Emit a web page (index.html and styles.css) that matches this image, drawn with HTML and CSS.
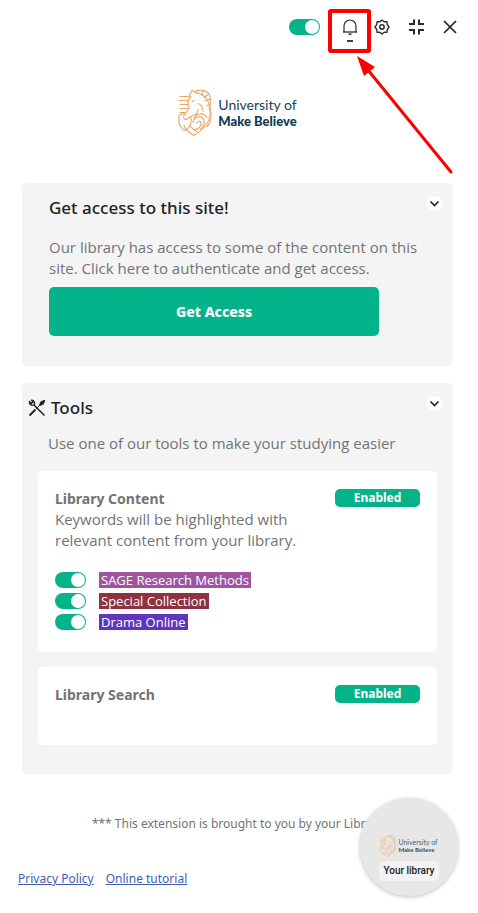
FILE: index.html
```html
<!DOCTYPE html>
<html lang="en">
<head>
<meta charset="utf-8">
<meta name="viewport" content="width=device-width, initial-scale=1">
<title>Library extension</title>
<link rel="stylesheet" href="styles.css">
</head>
<body>
<svg class="defs" aria-hidden="true">
  <symbol id="crest" viewBox="0 0 34 48">
    <g fill="none" stroke="#eba763" stroke-width="1.1" stroke-linecap="round" stroke-linejoin="round">
      <path d="M11 8l3-6 5 3c4 0 7 2 9 5 4 5 5 11 4 17-1 8-6 14-16 20-5-3-9-6-10-10"/>
      <path d="M17 3c7-3 15 0 15 6 1 4 0 8-1 10 3 6 3 14-2 19"/>
      <path d="M13 8c-3 3-4 7-2 12l-5 7c-1 2 0 4 2 4l7-4c3-1 5-3 5-6"/>
      <path d="M20 15c3 1 5 4 5 8M14 13l2-1"/>
      <path d="M1 27l5-2M1 27v7c0 4 3 6 6 8 3-2 6-4 6-8v-5"/>
      <path d="M16 30c3-6 10-6 13-1M15 34c1-6 9-8 11-2 1 4-1 7-4 9M19 35c1-4 5-2 4 1s-4 5-7 5M12 37c2 3 4 5 7 6"/>
      <path d="M2 8h9M1 12h9M2 16h8M2 20h8M2 24h5M20 1v4M25 2l-1 5M30 6l-4 3M32 11l-5 1M32 16l-3 1"/>
    </g>
  </symbol>
  <symbol id="chevron" viewBox="0 0 15 15">
    <path d="M3.500 5.500l4 4 4-4" fill="none" stroke="#222" stroke-width="1.600"/>
  </symbol>
</svg>

<header class="topbar">
  <input class="switch" type="checkbox" checked aria-label="Extension on">
  <div class="callout-anchor">
    <button class="icon-btn" type="button" aria-label="Notifications">
      <svg width="18" height="26" viewBox="0 0 18 26" fill="none" stroke="#2c2c2c">
        <path d="M3 14V8a6 6 0 0 1 12 0v6" stroke-width="1.200"/>
        <path d="M2 14h14" stroke-width="1.300"/>
        <path d="M7 15.500h4l-1 1.500H8z" fill="#2c2c2c" stroke="none"/>
        <path d="M6 23h6" stroke-width="1.800"/>
      </svg>
    </button>
    <svg class="callout" width="130" height="170" viewBox="0 0 130 170" aria-hidden="true">
      <rect x="2" y="2" width="39" height="40" rx="1" fill="none" stroke="#f00" stroke-width="4"/>
      <path d="M123 163L40 61" stroke="#f00" stroke-width="3" stroke-linecap="round"/>
      <path d="M29 47l18 11-11 9z" fill="#f00"/>
    </svg>
  </div>
  <button class="icon-btn" type="button" aria-label="Settings">
    <svg width="18" height="18" viewBox="0 0 18 18" fill="none" stroke="#2c2c2c" stroke-linejoin="round">
      <path d="M9 2l2.200 1.700 2.700-.1.300 2.800L16 9l-1.800 2.600-.3 2.800-2.700-.1L9 16l-2.200-1.700-2.700.1-.3-2.800L2 9l1.800-2.600.3-2.800 2.700.1z" stroke-width="1.400"/>
      <circle cx="9" cy="9" r="2.200" stroke-width="1.500"/>
    </svg>
  </button>
  <button class="icon-btn" type="button" aria-label="Collapse">
    <svg width="18" height="18" viewBox="0 0 18 18" fill="none" stroke="#2c2c2c" stroke-width="2">
      <path d="M7 1.500V6H2M12 1.500V6h5M7 16.500V12H2M12 16.500V12h5"/>
    </svg>
  </button>
  <button class="icon-btn" type="button" aria-label="Close">
    <svg width="18" height="18" viewBox="0 0 18 18" fill="none" stroke="#222" stroke-width="1.700">
      <path d="M3 3l12 12M15 3L3 15"/>
    </svg>
  </button>
</header>

<main class="content">
  <div class="brand">
    <svg class="crest" aria-hidden="true"><use href="#crest"/></svg>
    <div class="brand-name">University of<strong>Make Believe</strong></div>
  </div>

  <section class="panel access">
    <div class="panel-head">
      <h2>Get access to this site!</h2>
      <button class="round-btn" type="button" aria-label="Toggle access panel"><svg><use href="#chevron"/></svg></button>
    </div>
    <p>Our library has access to some of the content on this site. Click here to authenticate and get access.</p>
    <button class="primary" type="button">Get Access</button>
  </section>

  <section class="panel tools">
    <div class="panel-head">
      <svg class="tools-icon" viewBox="0 0 18 18" fill="none" stroke="#222" aria-hidden="true">
        <path d="M6 6l10.500 10.500" stroke-width="1.500"/>
        <path d="M1.500 2.500c-.5 3 2 4.500 4.500 3.500C7.500 4 6 1 3.500 1.200L5 3 3.500 4.500z" stroke-width="1.300" stroke-linejoin="round"/>
        <path d="M1.500 16.500L7.500 10.500" stroke-width="2"/>
        <path d="M8 10l4-4" stroke-width="1"/>
        <path d="M11 6l1.500-3.500 4-1.800.8.8-1.800 4L12 7z" fill="#222" stroke="none"/>
      </svg>
      <h2>Tools</h2>
      <button class="round-btn" type="button" aria-label="Toggle tools panel"><svg><use href="#chevron"/></svg></button>
    </div>
    <p>Use one of our tools to make your studying easier</p>

    <article class="card">
      <div class="card-text">
        <h3>Library Content</h3>
        <p>Keywords will be highlighted with relevant content from your library.</p>
        <ul class="sources">
          <li><input class="switch" type="checkbox" id="sage" checked><label class="sage" for="sage">SAGE Research Methods</label></li>
          <li><input class="switch" type="checkbox" id="special" checked><label class="special" for="special">Special Collection</label></li>
          <li><input class="switch" type="checkbox" id="drama" checked><label class="drama" for="drama">Drama Online</label></li>
        </ul>
      </div>
      <button class="status" type="button">Enabled</button>
    </article>

    <article class="card compact">
      <div class="card-text"><h3>Library Search</h3></div>
      <button class="status" type="button">Enabled</button>
    </article>
  </section>
</main>

<footer class="footer">
  <p>*** This extension is brought to you by your Library</p>
  <nav>
    <a href="#privacy">Privacy Policy</a>
    <a href="#tutorial">Online tutorial</a>
  </nav>
</footer>

<button class="bubble" type="button">
  <span class="brand mini">
    <svg class="crest" aria-hidden="true"><use href="#crest"/></svg>
    <span class="brand-name">University of<strong>Make Believe</strong></span>
  </span>
  <span class="bubble-label">Your library</span>
</button>
</body>
</html>
```
FILE: styles.css
```css
* { box-sizing: border-box; }

body {
  margin: 0;
  background: #fff;
  color: #737373;
  font-family: "Open Sans", "Noto Sans", sans-serif;
  font-size: 15px;
  line-height: 21px;
}

h2, h3, p, ul { margin: 0; padding: 0; }

button {
  border: 0;
  padding: 0;
  background: none;
  font-family: inherit;
  cursor: pointer;
}

.defs { position: absolute; width: 0; height: 0; }

.topbar {
  display: flex;
  justify-content: flex-end;
  align-items: center;
  gap: 16px;
  height: 54px;
  padding-right: 19px;
}

.icon-btn { display: flex; width: 18px; }
.icon-btn svg { flex: none; }

.callout-anchor { position: relative; margin: 0 -2px 0 5px; padding-top: 8px; }
.callout {
  position: absolute;
  left: -13px;
  top: -1px;
  z-index: 2;
  pointer-events: none;
}

.switch {
  appearance: none;
  flex: none;
  display: flex;
  width: 31px;
  height: 16px;
  margin: 0;
  border-radius: 8px;
  background: #05b38a;
  padding: 1px;
  justify-content: flex-end;
}
.switch::after {
  content: "";
  width: 14px;
  height: 14px;
  border-radius: 50%;
  background: #fff;
}

.content { padding: 0 25px 0 22px; }

.brand {
  display: flex;
  justify-content: center;
  align-items: center;
  gap: 6px;
  padding: 34px 0 46px;
}
.crest { width: 34px; height: 49px; }
.brand-name {
  color: #17435a;
  font-family: Lato, sans-serif;
  font-size: 14px;
  line-height: 16px;
  text-align: left;
}
.brand-name strong { display: block; color: #0d3a50; font-weight: 900; font-size: 13px; }

.panel {
  border-radius: 5px;
  background: #f4f4f4;
}
.panel + .panel { margin-top: 17px; }

.panel-head { display: flex; align-items: center; gap: 5px; height: 24px; }
.panel-head h2 {
  color: #222;
  font-family: "Noto Sans", sans-serif;
  font-size: 17px;
  font-weight: 500;
  line-height: 24px;
}
.round-btn {
  display: flex;
  align-self: flex-start;
  margin-left: auto;
  border-radius: 50%;
  background: #fff;
}
.round-btn svg { width: 15px; height: 15px; }

.access { padding: 13px 11px 30px 27px; }
.access p { margin: 17px 0 8px; padding-right: 20px; }

.primary {
  display: block;
  width: 84%;
  height: 49px;
  border-radius: 5px;
  background: #05b38a;
  color: #fff;
  font-family: "Noto Sans", sans-serif;
  font-size: 14px;
  font-weight: 800;
}

.tools { padding: 13px 16px 29px; }
.tools .panel-head { margin: 0 -5px 0 -10px; }
.tools > p { margin: 13px 10px 17px; }
.tools-icon { width: 18px; height: 18px; }

.card {
  display: flex;
  justify-content: space-between;
  align-items: flex-start;
  gap: 16px;
  padding: 18px 17px 22px;
  border-radius: 5px;
  background: #fff;
}
.card + .card { margin-top: 15px; }
.compact { min-height: 78px; }
.card-text { max-width: 250px; }
.card h3 {
  font-family: "Noto Sans", sans-serif;
  font-size: 14px;
  font-weight: 700;
  line-height: 20px;
}

.status {
  flex: none;
  width: 85px;
  height: 18px;
  border-radius: 5px;
  background: #05b38a;
  color: #fff;
  font-family: "Noto Sans", sans-serif;
  font-size: 12px;
  font-weight: 700;
  line-height: 18px;
}

.sources {
  display: grid;
  gap: 5px;
  margin-top: 21px;
  list-style: none;
}
.sources li { display: flex; align-items: center; gap: 13px; height: 16px; }
.sources label {
  height: 16px;
  padding: 0 2px;
  color: #fff;
  font-size: 13px;
  line-height: 16px;
}
.sage { background: #9f549f; }
.special { background: #8e3140; }
.drama { background: #6035bd; }

.footer {
  padding: 39px 25px 24px 18px;
  font-family: "Noto Sans", sans-serif;
  font-size: 12px;
}
.footer p { padding-left: 4px; text-align: center; }
.footer nav { display: flex; gap: 12px; margin-top: 34px; }
.footer a { color: #3f5db5; }

.bubble {
  position: absolute;
  right: 20px;
  top: 798px;
  display: flex;
  flex-direction: column;
  align-items: center;
  width: 98px;
  height: 98px;
  padding-top: 36px;
  border-radius: 50%;
  background: #e7e7e7;
  box-shadow: 0 1px 4px #00000040;
}
.mini { gap: 2px; padding: 0; opacity: 0.8; }
.mini .crest { width: 16px; height: 24px; }
.mini .brand-name { font-size: 7px; line-height: 8px; }
.mini strong { font-size: 6px; }
.bubble-label {
  margin-top: 3px;
  padding: 0 4px;
  border-radius: 5px;
  background: #f3f3f3;
  color: #222;
  font-family: Roboto, sans-serif;
  font-size: 10px;
  font-weight: 500;
  line-height: 20px;
}
```
